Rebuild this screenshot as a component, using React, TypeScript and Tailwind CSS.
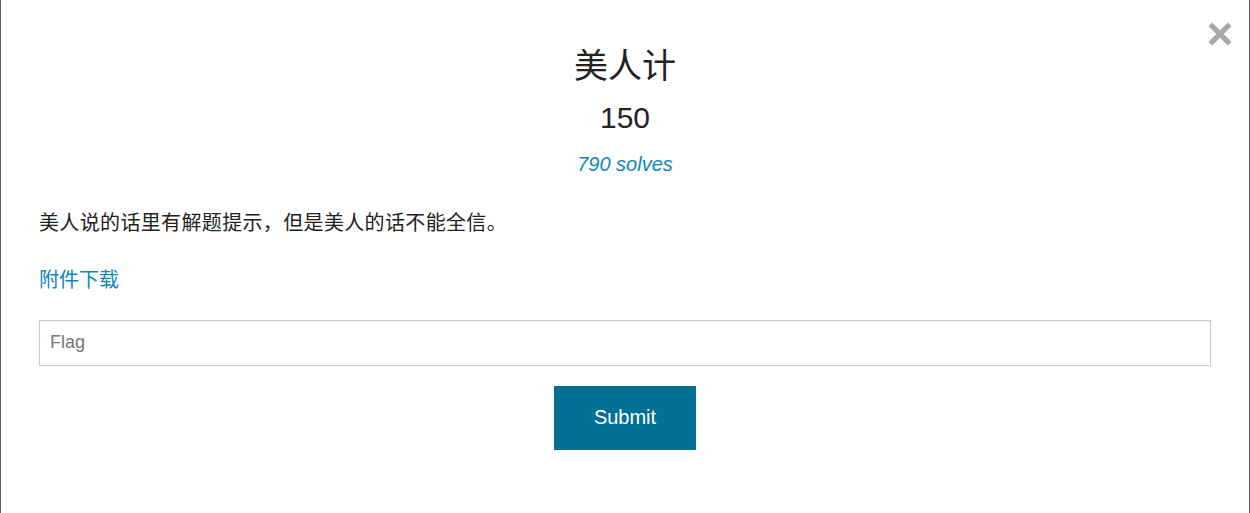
export default function App() {
  return (
    <div className="relative h-[513px] w-full overflow-hidden border-x border-[#5f5f5f] bg-white px-[38px] font-['Liberation_Sans','Noto_Sans_CJK_SC',sans-serif] text-[#222]">
      <button
        type="button"
        aria-label="Close"
        className="absolute right-[17px] top-[22px] flex h-6 w-6 items-center justify-center"
      >
        <svg viewBox="0 0 24 24" className="h-6 w-6" fill="#a9a9a9">
          <path d="M4.2 0.5 L12 8.3 L19.8 0.5 L23.5 4.2 L15.7 12 L23.5 19.8 L19.8 23.5 L12 15.7 L4.2 23.5 L0.5 19.8 L8.3 12 L0.5 4.2 Z" />
        </svg>
      </button>

      <div className="flex flex-col items-center pt-[46px]">
        <h1 className="text-[34px] leading-[40px] font-normal">美人计</h1>
        <p className="mt-[14px] text-[30px] leading-[36px]">150</p>
        <p className="mt-[14px] text-[20px] leading-[28px] italic text-[#0f87b8]">790 solves</p>
      </div>

      <p className="mt-[31px] text-[20px] leading-[28px] tracking-[0.35px]">美人说的话里有解题提示，但是美人的话不能全信。</p>
      <a href="#" className="mt-[29px] block w-fit text-[20px] leading-[28px] text-[#0f87b8]">
        附件下载
      </a>

      <input
        type="text"
        placeholder="Flag"
        className="mt-[26px] block h-[46px] w-full border border-[#cccccc] px-[10px] pb-[2px] text-[18px] text-[#555] shadow-[inset_0_1px_1px_rgba(0,0,0,0.075)] outline-none placeholder:text-[#777]"
      />

      <div className="mt-[20px] flex justify-center">
        <button type="button" className="h-16 w-[142px] bg-[#037094] pb-[2px] text-[20px] text-white">
          Submit
        </button>
      </div>
    </div>
  );
}
